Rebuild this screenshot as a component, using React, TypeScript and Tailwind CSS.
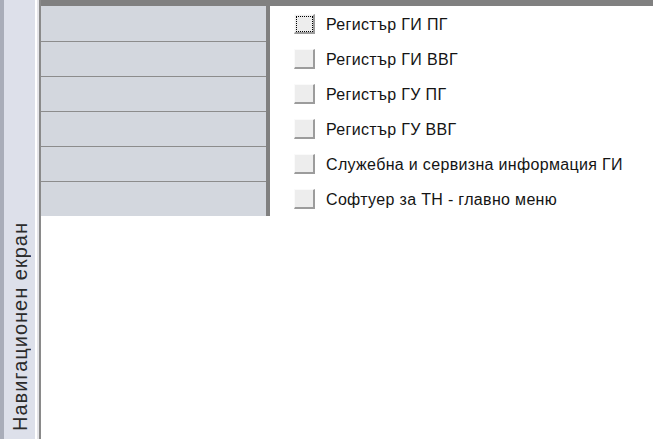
import React from 'react';

const items = [
  'Регистър ГИ ПГ',
  'Регистър ГИ ВВГ',
  'Регистър ГУ ПГ',
  'Регистър ГУ ВВГ',
  'Служебна и сервизна информация ГИ',
  'Софтуер за ТН - главно меню',
];

const App: React.FC = () => {
  return (
    <div className="flex w-[653px] h-[439px] bg-white overflow-hidden font-['Liberation_Sans',Arial,sans-serif]">
      {/* navigation pane, collapsed */}
      <div className="flex h-full">
        <div className="w-[4px] bg-[#a9adb9]" />
        <div className="w-[31px] bg-[#dde0ea] flex flex-col justify-end items-center pb-[8px]">
          <span className="[writing-mode:vertical-rl] rotate-180 text-[20px] tracking-[1px] leading-none text-[#2b2b2b] whitespace-nowrap">
            Навигационен екран
          </span>
        </div>
        <div className="w-[2px] bg-white" />
        <div className="w-[2px] bg-[#e4e4e8]" />
        <div className="w-[2px] bg-[#8a8a8a]" />
      </div>

      {/* main area */}
      <div className="flex-1 flex flex-col">
        <div className="h-[6px] bg-[#808080]" />
        <div className="flex">
          <div className="w-[229px] border-r-4 border-[#808080] bg-[#d3d7de]">
            {items.map((_, i) => (
              <div
                key={i}
                className={i === 0 ? 'h-[35px]' : 'h-[35px] border-t border-[#8c8c8c]'}
              />
            ))}
          </div>
          <div className="flex-1 pl-[24px]">
            {items.map((label, i) => (
              <div key={label} className="h-[35px] flex items-center gap-[11px]">
                <div
                  className={
                    'w-[21px] h-[20px] bg-[#ededed] border-t border-l border-[#fafafa] border-r-2 border-b-2 border-r-[#9c9c9c] border-b-[#9c9c9c]' +
                    (i === 0 ? ' outline-1 outline-dotted outline-black outline-offset-[-3px]' : '')
                  }
                />
                <span className="pt-[3px] text-[16px] tracking-[0.33px] text-[#141414] whitespace-nowrap">{label}</span>
              </div>
            ))}
          </div>
        </div>
      </div>
    </div>
  );
};

export default App;
